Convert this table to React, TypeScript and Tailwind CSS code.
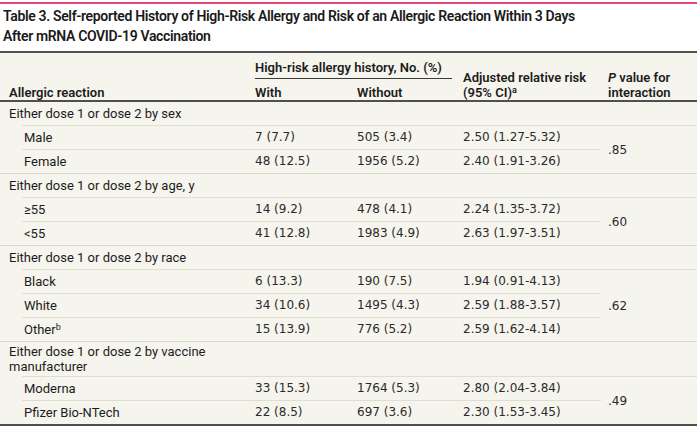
type Row = [string, string, string, string, string?];

type Group = {
  label: string;
  p: string;
  rows: Row[];
};

const groups: Group[] = [
  {
    label: "Either dose 1 or dose 2 by sex",
    p: ".85",
    rows: [
      ["Male", "7 (7.7)", "505 (3.4)", "2.50 (1.27-5.32)"],
      ["Female", "48 (12.5)", "1956 (5.2)", "2.40 (1.91-3.26)"],
    ],
  },
  {
    label: "Either dose 1 or dose 2 by age, y",
    p: ".60",
    rows: [
      ["≥55", "14 (9.2)", "478 (4.1)", "2.24 (1.35-3.72)"],
      ["<55", "41 (12.8)", "1983 (4.9)", "2.63 (1.97-3.51)"],
    ],
  },
  {
    label: "Either dose 1 or dose 2 by race",
    p: ".62",
    rows: [
      ["Black", "6 (13.3)", "190 (7.5)", "1.94 (0.91-4.13)"],
      ["White", "34 (10.6)", "1495 (4.3)", "2.59 (1.88-3.57)"],
      ["Other", "15 (13.9)", "776 (5.2)", "2.59 (1.62-4.14)", "b"],
    ],
  },
  {
    label: "Either dose 1 or dose 2 by vaccine manufacturer",
    p: ".49",
    rows: [
      ["Moderna", "33 (15.3)", "1764 (5.3)", "2.80 (2.04-3.84)"],
      ["Pfizer Bio-NTech", "22 (8.5)", "697 (3.6)", "2.30 (1.53-3.45)"],
    ],
  },
];

const num = "font-['DejaVu_Sans',sans-serif] text-[12px] text-[#2b2b2b]";

export default function App() {
  return (
    <div className="w-[700px] h-[429px] bg-white font-['Roboto',sans-serif] text-[#1c1c1c]">
      <div className="pt-[2px]">
        <div className="w-[697px] h-[2px] bg-[#e4467a]" />
      </div>

      <h1 className="mt-[2px] pl-[3px] text-[14px] leading-[20px] font-semibold tracking-[-0.35px] text-[#1a1a1a]">
        Table 3. Self-reported History of High-Risk Allergy and Risk of an Allergic Reaction Within 3 Days
        <br />
        After mRNA COVID-19 Vaccination
      </h1>

      <div className="mt-[5px] w-[697px] bg-[#f5f4ed] border-t-2 border-b-2 border-[#4f4f4f] text-[13px]">
        {/* header */}
        <div className="flex items-end h-[49px] border-b-2 border-[#4f4f4f] font-semibold leading-[15px]">
          <div className="w-[247px] pl-[9px]">Allergic reaction</div>
          <div className="w-[208px] flex flex-col">
            <div className="ml-[8px] mr-[3px] pb-[3px] border-b border-[#3a3a3a]">
              High-risk allergy history, No. (%)
            </div>
            <div className="flex pt-[6px]">
              <div className="w-[102px] pl-[8px]">With</div>
              <div className="pl-[8px]">Without</div>
            </div>
          </div>
          <div className="w-[145px] pl-[8px]">
            Adjusted relative risk
            <br />
            (95% CI)<sup className="text-[9px]">a</sup>
          </div>
          <div className="flex-1 pl-[8px]">
            <i>P</i> value for
            <br />
            interaction
          </div>
        </div>

        {/* body */}
        {groups.map((g, gi) => (
          <div
            key={g.label}
            className={gi < groups.length - 1 ? "border-b border-[#dad7ca]" : ""}
          >
            <div className="w-[247px] min-h-[23px] pl-[9px] pr-[4px] py-[2px] flex items-center leading-[15px]">
              {g.label}
            </div>
            <div className="ml-[22px] flex border-t border-[#dfdcd0]">
              <div className="w-[579px] flex flex-col divide-y divide-[#dfdcd0]">
                {g.rows.map((r) => (
                  <div key={r[0]} className="flex items-center leading-[23px]">
                    <div className="w-[233px] pl-[2px]">
                      {r[0]}
                      {r[4] && <sup className="text-[9px]">{r[4]}</sup>}
                    </div>
                    <div className={`w-[102px] ${num}`}>{r[1]}</div>
                    <div className={`w-[106px] ${num}`}>{r[2]}</div>
                    <div className={num}>{r[3]}</div>
                  </div>
                ))}
              </div>
              <div className={`flex-1 flex items-center pl-[7px] ${num}`}>{g.p}</div>
            </div>
          </div>
        ))}
      </div>
    </div>
  );
}
